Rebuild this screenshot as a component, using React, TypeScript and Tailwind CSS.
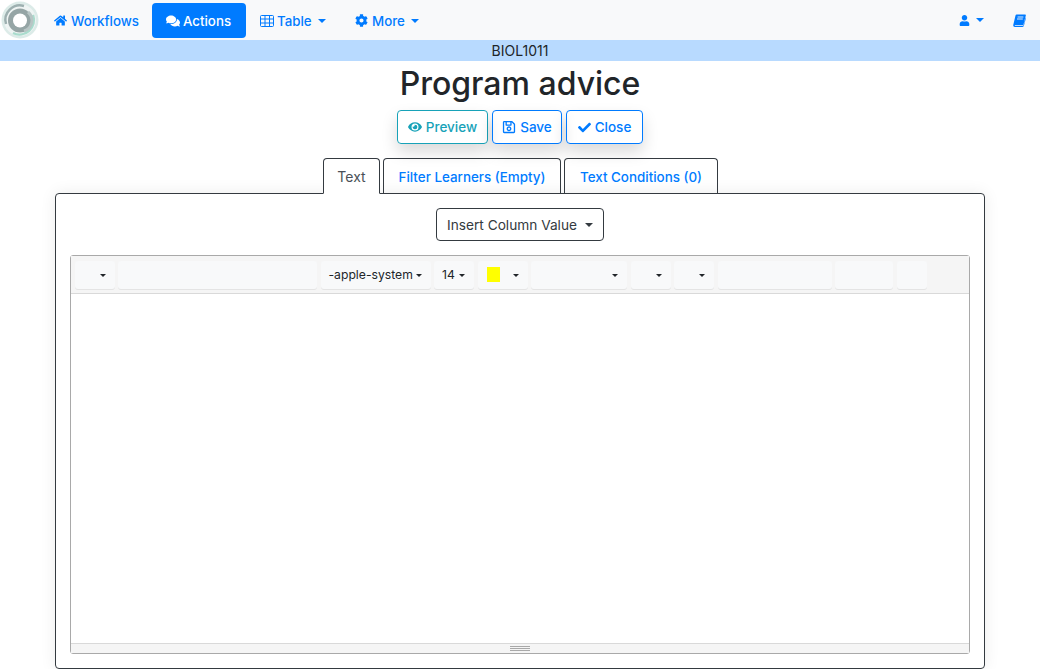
import React from "react";
import { FaHome, FaComments, FaCog, FaUser, FaEye, FaRegSave, FaCheck } from "react-icons/fa";

function Caret() {
  return <span className="inline-block w-0 h-0 border-x-[4px] border-x-transparent border-t-[4px] border-t-current" />;
}

function SmallCaret() {
  return <span className="inline-block w-0 h-0 border-x-[3px] border-x-transparent border-t-[3px] border-t-[#212529]" />;
}

function Logo() {
  return (
    <svg width="40" height="40" viewBox="0 0 40 40" className="shrink-0">
      <rect width="40" height="40" fill="#ffffff" />
      <circle cx="20" cy="20" r="18.5" fill="#dcebe8" />
      <circle cx="20" cy="20" r="16" fill="#eef4f3" />
      <path d="M6 24 A14.5 14.5 0 0 1 24 6" fill="none" stroke="#9db0b0" strokeWidth="2.5" />
      <path d="M33 15 A14.5 14.5 0 0 1 13 33" fill="none" stroke="#a9dccd" strokeWidth="2.5" />
      <circle cx="20" cy="20.5" r="12" fill="#95a5a5" />
      <path d="M28 12 A11 11 0 0 1 24 31" fill="none" stroke="#b8c6c5" strokeWidth="3" />
      <circle cx="20" cy="20.5" r="7" fill="#ffffff" />
    </svg>
  );
}

function TableIcon() {
  return (
    <svg width="14" height="12" viewBox="0 0 14 12" fill="none" stroke="currentColor" strokeWidth="1">
      <rect x="0.5" y="0.5" width="13" height="11" rx="1" />
      <path d="M0.5 4H13.5M0.5 8H13.5M5 0.5V11.5M9.5 0.5V11.5" />
    </svg>
  );
}

function BookIcon() {
  return (
    <svg width="13" height="13" viewBox="0 0 13 13" fill="currentColor">
      <path d="M3.6 0.5H12.2C12.8 0.5 13 1 12.8 1.6L10.6 10.2C10.4 10.9 10 11.3 9.2 11.3H2.4C1.8 11.3 1.6 11.7 2 12H9.6C10 12 10.4 11.8 10.6 11.2L12.6 3.6L13 4L10.9 11.8C10.7 12.5 10.2 13 9.5 13H1.8C0.7 13 0 12 0.3 10.8L2.5 1.6C2.7 0.9 3 0.5 3.6 0.5Z" />
      <path d="M4.6 3H10.4M4 5H9.8" stroke="#f8f9fa" strokeWidth="0.9" />
    </svg>
  );
}

function NavItem({ w, icon, label, caret, active }: { w: string; icon: React.ReactNode; label: string; caret?: boolean; active?: boolean }) {
  return (
    <a className={"flex items-center h-[35px] pl-[14px] rounded text-[13.3px] font-medium " + w + " " + (active ? "bg-[#007bff] text-white" : "text-[#007bff]")}>
      <span className="w-[17px]">{icon}</span>
      <span className="pt-[2px]">{label}</span>
      {caret && <span className="flex ml-[6px]"><Caret /></span>}
    </a>
  );
}

function ToolBtn({ w, text, caret, swatch }: { w: string; text?: string; caret?: boolean; swatch?: boolean }) {
  return (
    <div className={"h-[28px] rounded-[3px] bg-[#f8f9fa] shadow-[0_1px_0_#e4e4e4] flex items-center whitespace-nowrap text-[12.2px] text-[#212529] " + w}>
      {swatch && <span className="ml-[9px] -mt-[2px] w-[13px] h-[15px] bg-[#ffff00]" />}
      {text && <span className="ml-2">{text}</span>}
      {caret && <span className="flex ml-auto mr-[9px]"><SmallCaret /></span>}
    </div>
  );
}

export default function App() {
  return (
    <div className="h-[669px] w-[1040px] overflow-hidden bg-white font-['Inter','Liberation_Sans',sans-serif] text-[#212529]">
      <nav className="h-[40px] bg-[#f8f9fa] flex items-center">
        <Logo />
        <div className="flex items-center mt-[1px]">
          <NavItem w="w-[112px]" icon={<FaHome size={13} />} label="Workflows" />
          <NavItem w="w-[94px]" icon={<FaComments size={14} />} label="Actions" active />
          <NavItem w="w-[95px]" icon={<TableIcon />} label="Table" caret />
          <NavItem w="w-[90px]" icon={<FaCog size={13} />} label="More" caret />
        </div>
        <div className="ml-auto flex items-center text-[#007bff] mr-[14px]">
          <FaUser size={11} />
          <span className="flex ml-[6px]"><Caret /></span>
          <span className="flex ml-[29px]"><BookIcon /></span>
        </div>
      </nav>
      <div className="h-[21px] bg-[#b8daff] text-center text-[14px] leading-[21px]">BIOL1011</div>

      <h1 className="text-center text-[32px] leading-[44px] font-medium mt-[1px]">Program advice</h1>

      <div className="flex justify-center gap-[4px] mt-[4px]">
        <button className="h-[34px] w-[91px] flex items-center justify-center gap-1 rounded border border-[#17a2b8] text-[#17a2b8] text-[13.5px] font-medium shadow-[0_8px_16px_rgba(0,0,0,0.15)]">
          <FaEye size={14} /> Preview
        </button>
        <button className="h-[34px] w-[70px] flex items-center justify-center gap-1 rounded border border-[#007bff] text-[#007bff] text-[13.5px] font-medium shadow-[0_8px_16px_rgba(0,0,0,0.15)]">
          <FaRegSave size={14} /> Save
        </button>
        <button className="h-[34px] w-[77px] flex items-center justify-center gap-1 rounded border border-[#007bff] text-[#007bff] text-[13.5px] font-medium shadow-[0_8px_16px_rgba(0,0,0,0.15)]">
          <FaCheck size={13} /> Close
        </button>
      </div>

      <div className="flex justify-center gap-[3px] mt-[14px] relative z-10 h-[36px] ml-[1px]">
        <div className="w-[57px] h-[36px] border border-[#343a40] border-b-white bg-white rounded-t text-[14px] flex items-center justify-center text-[#495057]">Text</div>
        <div className="w-[178px] h-[35px] pt-[2px] border border-b-0 border-[#343a40] rounded-t text-[13.4px] font-medium text-[#007bff] flex items-center justify-center">Filter Learners (Empty)</div>
        <div className="w-[154px] h-[35px] pt-[2px] border border-b-0 border-[#343a40] rounded-t text-[13.4px] font-medium text-[#007bff] flex items-center justify-center">Text Conditions (0)</div>
      </div>

      <div className="mx-[55px] w-[930px] h-[476px] -mt-[1px] border border-[#343a40] rounded px-[14px] shadow-[0_0_16px_rgba(0,0,0,0.08)]">
        <div className="flex justify-center mt-[14px]">
          <button className="h-[33px] w-[168px] pt-px flex items-center justify-center border border-[#343a40] rounded text-[13.7px] text-[#343a40]">
            Insert Column Value
            <span className="flex ml-2"><Caret /></span>
          </button>
        </div>
        <div className="mt-[14px] h-[399px] border border-[#a9a9a9] rounded-[3px] flex flex-col">
          <div className="h-[38px] bg-[#f5f5f5] border-b border-[#d9d9d9] flex items-start gap-[3.5px] pl-[4px] pt-[5px]">
            <ToolBtn w="w-[39.5px]" caret />
            <ToolBtn w="w-[199px]" />
            <ToolBtn w="w-[110px]" text="-apple-system" caret />
            <ToolBtn w="w-[40px]" text="14" caret />
            <ToolBtn w="w-[50px]" swatch caret />
            <ToolBtn w="w-[96px]" caret />
            <ToolBtn w="w-[40px]" caret />
            <ToolBtn w="w-[40px]" caret />
            <ToolBtn w="w-[114px]" />
            <ToolBtn w="w-[58px]" />
            <ToolBtn w="w-[30px]" />
          </div>
          <div className="flex-1" />
          <div className="h-[10px] bg-[#f5f5f5] border-t border-[#d9d9d9] flex items-center justify-center">
            <div className="w-[20px] h-[5px] border-y border-[#a9a9a9] flex items-center">
              <div className="w-full h-px bg-[#a9a9a9]" />
            </div>
          </div>
        </div>
      </div>
    </div>
  );
}
